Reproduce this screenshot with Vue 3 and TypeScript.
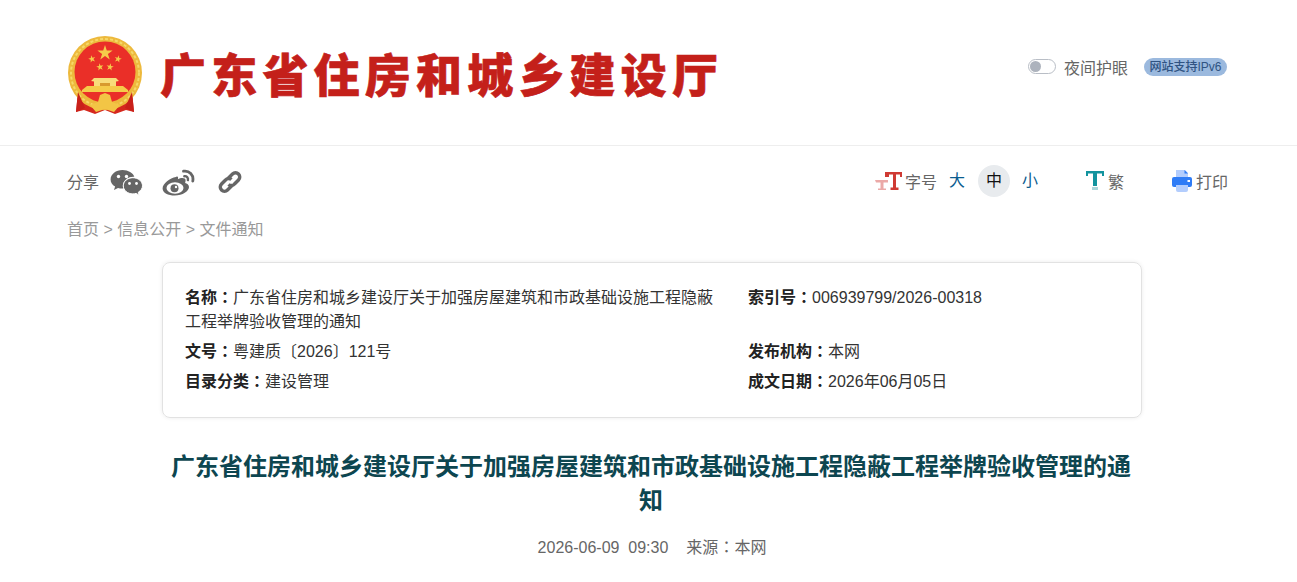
<script setup lang="ts">
// 文件通知详情页顶部：站点头、分享/字号工具条、信息卡片和标题
const meta = [
  { label: "名称", value: "广东省住房和城乡建设厅关于加强房屋建筑和市政基础设施工程隐蔽工程举牌验收管理的通知" },
  { label: "索引号", value: "006939799/2026-00318" },
  { label: "文号", value: "粤建质〔2026〕121号" },
  { label: "发布机构", value: "本网" },
  { label: "目录分类", value: "建设管理" },
  { label: "成文日期", value: "2026年06月05日" },
];

function star(cx: number, cy: number, r: number, rot = 0) {
  const pts: string[] = [];
  for (let i = 0; i < 10; i++) {
    const rad = i % 2 ? r * 0.382 : r;
    const a = (-90 + rot + i * 36) * (Math.PI / 180);
    pts.push(`${(cx + rad * Math.cos(a)).toFixed(2)},${(cy + rad * Math.sin(a)).toFixed(2)}`);
  }
  return pts.join(" ");
}

const stars = [
  { x: 38, y: 17, r: 8, rot: 0 },
  { x: 25, y: 23, r: 3.8, rot: -15 },
  { x: 51, y: 23, r: 3.8, rot: 15 },
  { x: 33, y: 31, r: 3.8, rot: -10 },
  { x: 43, y: 31, r: 3.8, rot: 10 },
];
</script>

<template>
  <div class="page">
    <header class="site-head">
      <div class="brand">
        <svg class="emblem" width="75" height="80" viewBox="0 0 75 80">
          <path d="M11 55 L38 70 L65 55 L67 76 L59 74 L48 78 L38 74 L28 78 L17 74 L9 76 Z" fill="#d5281e" />
          <circle cx="38" cy="37" r="37" fill="#edb93c" />
          <circle cx="38" cy="37" r="34" fill="none" stroke="#f6d868" stroke-width="2" stroke-dasharray="3 2" />
          <circle cx="38" cy="36" r="30.500" fill="#ea2f28" />
          <polygon v-for="s in stars" :key="s.x" :points="star(s.x, s.y, s.r, s.rot)" fill="#f5cb4a" />
          <path d="M27 42 L49 42 L52 45 L49 45.500 L49 50 L27 50 L27 45.500 L24 45 Z" fill="#f8dc7a" />
          <path d="M20 50 H56 L61 54 V56 H15 V54 Z" fill="#f5cb4a" />
          <path d="M33 47 H43 V50 H33 Z" fill="#d89a2e" />
          <path d="M33 59 L38 57 L43 59 L45 66 L53 69 L47 76 L38 73 L29 76 L23 69 L31 66 Z" fill="#f3c545" />
          <path d="M11 56 L18 72 L9 76 Z M65 56 L58 72 L67 76 Z" fill="#c9201a" />
        </svg>
        <span class="site-name">广东省住房和城乡建设厅</span>
      </div>
      <div class="head-tools">
        <span class="switch"><i></i></span>
        <span class="night">夜间护眼</span>
        <span class="ipv6">网站支持IPv6</span>
      </div>
    </header>

    <main class="content">
      <div class="toolbar">
        <div class="share">
          <span class="share-label">分享</span>
          <svg class="ico-wechat" width="33" height="27" viewBox="0 0 33 27">
            <path d="M12.500 1C5.900 1 .6 5.200.6 10.400c0 3 1.700 5.500 4.500 7.200l-1.100 3.500 4-2.100c1.300.4 2.800.6 4.200.6l1.100-.1c-.3-.9-.4-1.800-.4-2.800 0-5 4.700-9 10.500-9h.9C23.100 4 18.300 1 12.500 1z" fill="#666" />
            <path d="M32.500 16.800c0-4.500-4.300-8.100-9.600-8.100s-9.600 3.600-9.600 8.100 4.300 8.100 9.600 8.100c1.100 0 2.200-.2 3.200-.5l3.100 1.800-.9-3c2.600-1.500 4.200-3.800 4.200-6.400z" fill="#666" stroke="#fff" stroke-width="1" />
            <circle cx="8.500" cy="7.500" r="1.700" fill="#fff" />
            <circle cx="16.500" cy="7.500" r="1.700" fill="#fff" />
            <circle cx="19.500" cy="14.500" r="1.400" fill="#fff" />
            <circle cx="26.500" cy="14.500" r="1.400" fill="#fff" />
          </svg>
          <svg class="ico-weibo" width="33" height="27" viewBox="0 0 33 27">
            <path d="M14 8C8 9 .6 14.500.6 19.400c0 4.300 5.600 7.100 12.100 7.100 8 0 14.300-4.300 14.300-8.500 0-2.500-2.100-3.600-3.900-4.100.6-1.600.9-3.300-.4-4.300-1.700-1.100-4.900-.4-6.800.6.500-1.600.2-3.400-1.900-2.200z" fill="#666" />
            <ellipse cx="13" cy="19" rx="8.500" ry="5.800" fill="#fff" />
            <circle cx="12.500" cy="19.200" r="4" fill="#666" />
            <circle cx="14" cy="18" r="1.200" fill="#fff" />
            <path d="M21.500 2.200c5.800-1 10.400 4 9.300 9.800" fill="none" stroke="#666" stroke-width="2.800" stroke-linecap="round" />
            <path d="M22.300 7.200c2.300-.4 4.200 1.500 3.600 3.900" fill="none" stroke="#666" stroke-width="2.400" stroke-linecap="round" />
          </svg>
          <svg class="ico-link" width="26" height="26" viewBox="0 0 26 26" fill="none" stroke="#666" stroke-width="3.400">
            <path d="M11 9.500 L15.500 5 a4.200 4.200 0 0 1 6 6 L17.500 15 a4.200 4.200 0 0 1-6 .5" />
            <path d="M15 16.500 L10.500 21 a4.200 4.200 0 0 1-6-6 L8.500 11 a4.200 4.200 0 0 1 6-.5" />
          </svg>
        </div>
        <div class="reader">
          <div class="font-size">
            <svg width="27" height="18" viewBox="0 0 27 18">
              <path d="M0 8h13v2.500H8.500v6H11V18H3v-1.500h2.500v-6H1z" fill="#eba9a7" />
              <path d="M10 0h17v5h-2V2.500h-4v13h2.500V18h-8v-2.500H18v-13h-4V5h-4z" fill="#cf3a33" />
            </svg>
            <span class="tool-text">字号</span>
            <span class="size size-big">大</span>
            <span class="size current">中</span>
            <span class="size size-small">小</span>
          </div>
          <div class="trad">
            <svg width="18" height="20" viewBox="0 0 18 20">
              <path d="M0 0h18v5h-2V2.500h-5V15H7V2.500H2V5H0z" fill="#12939e" />
              <path d="M6 16h6v3H6z" fill="#a9d6da" />
            </svg>
            <span class="tool-text">繁</span>
          </div>
          <div class="print">
            <svg width="20" height="22" viewBox="0 0 20 22">
              <path d="M4 0h9l3 3v5H4z" fill="#b3cdfd" />
              <path d="M12.500 0L16 3.500h-3.500z" fill="#2f7cf6" />
              <path d="M2 7h16a2 2 0 0 1 2 2v6a2 2 0 0 1-2 2H2a2 2 0 0 1-2-2V9a2 2 0 0 1 2-2z" fill="#2f7cf6" />
              <path d="M4 15h12v5a2 2 0 0 1-2 2H6a2 2 0 0 1-2-2z" fill="#b3cdfd" />
              <rect x="15.500" y="10" width="2.500" height="2" fill="#fff" />
            </svg>
            <span class="tool-text">打印</span>
          </div>
        </div>
      </div>

      <nav class="crumbs">首页 &gt; 信息公开 &gt; 文件通知</nav>

      <section class="card">
        <p v-for="m in meta" :key="m.label" class="meta-item"><b>{{ m.label }}<span class="colon">：</span></b>{{ m.value }}</p>
      </section>

      <h1 class="title">广东省住房和城乡建设厅关于加强房屋建筑和市政基础设施工程隐蔽工程举牌验收管理的通知</h1>
      <div class="info">
        <span>2026-06-09&nbsp;&nbsp;09:30</span>
        <span>来源<span class="colon">：</span>本网</span>
      </div>
    </main>
  </div>
</template>

<style>
html,
body {
  margin: 0;
  background: #fff;
  overflow: hidden;
}
</style>

<style scoped>
.page {
  font-family: "Liberation Sans", "Noto Sans CJK SC", sans-serif;
  font-size: 16px;
  color: #333;
  min-height: 582px;
}

.site-head {
  height: 145px;
  border-bottom: 1px solid #eee;
  padding: 0 70px 0 67px;
  display: flex;
  align-items: center;
  justify-content: space-between;
}

.brand {
  display: flex;
  align-items: center;
  gap: 18px;
}

.emblem {
  display: block;
  margin-top: 6px;
}

.site-name {
  font-size: 46px;
  font-weight: 900;
  letter-spacing: 5.200px;
  line-height: 60px;
  color: #c4201a;
  margin-top: 7px;
  -webkit-text-stroke: 0.6px #c4201a;
}

.head-tools {
  display: flex;
  align-items: center;
  margin-bottom: 12px;
}

.switch {
  box-sizing: border-box;
  width: 28px;
  height: 15px;
  border: 1px solid #b9bec6;
  border-radius: 8px;
  padding: 1px;
  margin-right: 8px;
}

.switch i {
  display: block;
  width: 11px;
  height: 11px;
  border-radius: 50%;
  background: #adb3bd;
}

.night {
  color: #666;
  margin-right: 16px;
}

.ipv6 {
  font-size: 12px;
  font-weight: 500;
  line-height: 18px;
  padding: 0 5.500px;
  border-radius: 9px;
  background: #9bb9de;
  color: #2f5382;
}

.content {
  padding: 0 60px 0 67px;
}

.toolbar {
  height: 70px;
  margin: 0 9px 2px 0;
  display: flex;
  align-items: center;
  justify-content: space-between;
}

.share,
.reader,
.font-size,
.trad,
.print {
  display: flex;
  align-items: center;
}

.share-label {
  color: #666;
  margin-right: 11px;
}

.share svg {
  margin-top: 2px;
}

.ico-weibo {
  margin-left: 19px;
}

.ico-link {
  margin-left: 22px;
}

.tool-text {
  color: #666;
}

.font-size svg {
  margin-right: 3px;
}

.size {
  width: 32px;
  height: 32px;
  line-height: 32px;
  text-align: center;
  border-radius: 50%;
  color: #0a5c8f;
}

.size-big {
  margin: 0 1px 0 4px;
}

.current {
  margin: 0 4px;
  background: #e8ebee;
  color: #111;
}

.trad {
  margin-left: 40px;
}

.trad svg {
  margin-right: 4px;
}

.print {
  margin-left: 48px;
}

.print svg {
  margin-right: 4px;
}

.crumbs {
  color: #999;
  line-height: 24px;
}

.card {
  box-sizing: border-box;
  width: 980px;
  margin: 20px auto 0;
  padding: 23px 22px 23px;
  border: 1px solid #e2e2e2;
  border-radius: 8px;
  box-shadow: 0 0 4px rgba(0, 0, 0, 0.08);
  display: grid;
  grid-template-columns: 540px 1fr;
  column-gap: 23px;
  row-gap: 6px;
}

.meta-item {
  margin: 0;
  line-height: 24px;
  color: #333;
}

.meta-item b {
  color: #222;
}

.colon {
  font-family: "Noto Sans CJK TC", sans-serif;
  line-height: 0;
}

.title {
  box-sizing: border-box;
  width: 980px;
  margin: 32px auto 0;
  padding-right: 2px;
  text-align: center;
  font-size: 24px;
  line-height: 34px;
  font-weight: 700;
  color: #0d4650;
}

.info {
  margin-top: 18px;
  display: flex;
  justify-content: center;
  gap: 18px;
  color: #666;
  line-height: 24px;
}
</style>
